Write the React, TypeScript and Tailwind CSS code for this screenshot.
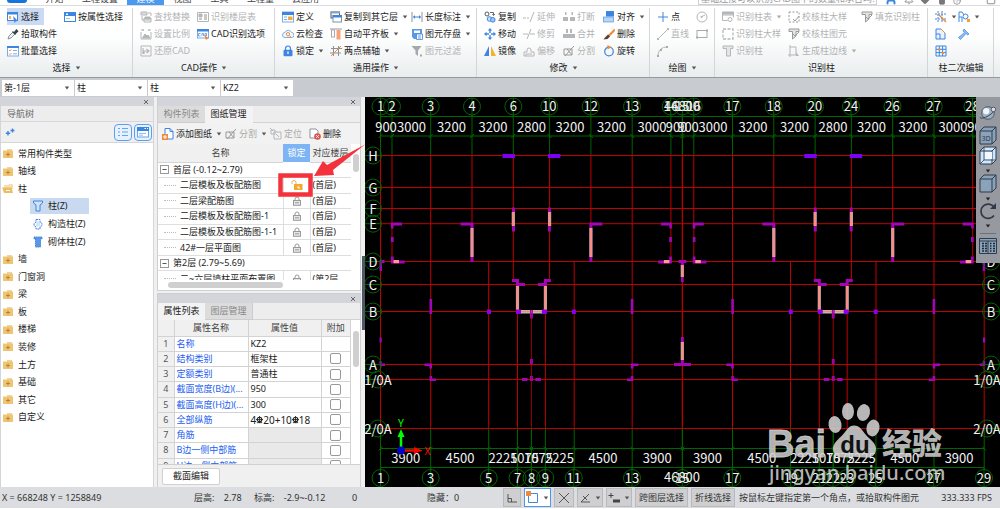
import React from 'react';
import { User, Bell, Heart, Shirt, HelpCircle, Minus, Square } from 'lucide-react';

const B = '#3d86e0';
const O = '#f08a3c';
const G = '#b4b6b8';
const D = '#555b61';

const icons: Record<string, React.ReactNode> = {
  select: (<><rect x=".5" y="1.5" width="10" height="8" fill="#fff" stroke={B} /><path d="M0 1h11v2.5H0z" fill={B} /><path d="M2 5h2v3H2z" fill="#f3b35b" /><path d="M6 5l5 5-2.2.2L7.5 12z" fill={B} /></>),
  attr: (<><rect x=".5" y="1.5" width="11" height="9" fill="#fff" stroke={B} /><path d="M0 1h12v4H0z" fill={B} /><path d="M2 7.5h4" stroke="#9cc" /><path d="M2 2.5h2v1.500H2z" fill="#fff" /></>),
  picker: (<><path d="M1 11l1-3 4-4 2 2-4 4z" fill="#eef3f8" stroke="#7e8892" strokeWidth=".9" /><path d="M5.500 3.500l3 3M7 5l2.500-3 1.200 1.200L8 6z" stroke="#3a4048" fill="#3a4048" strokeWidth="1.200" /></>),
  batch: (<><rect x=".5" y="1.500" width="11" height="9.500" fill="#fff" stroke="#78aee8" /><path d="M0 1h12v2H0z" fill={B} /><path d="M2 5l1 1 1.500-1.500M2 8.500l1 1L4.500 8" stroke={O} fill="none" strokeWidth=".9" /><path d="M6 5.500h4M6 8.800h4" stroke="#78aee8" /></>),
  find: (<g stroke={G} fill="none"><path d="M1 1h6v3H1z" fill="#ddd" /><path d="M8 2h3v3M4 7h7v4H4zM4 9h7M2 5v4h2" /><path d="M5 6h5v2H5z" fill={G} /></g>),
  scale: (<g stroke={G} fill="none"><path d="M1 4v7h10V4M1 2h3M8 2h3M3 1v2M9 1v2" /><path d="M2.500 10l2.500-4 2 2 1-1 2 3z" fill={G} /></g>),
  restore: (<g stroke={G} fill="none"><path d="M1 1h10v10H1z" /><path d="M4 9V6h4M6.500 4L9 6 6.500 8M3 3v6" strokeWidth="1.200" /></g>),
  floors: (<g stroke={G} fill="none"><path d="M.5 1.500h11v9H.5z" /><path d="M2 3h3v3H2z" fill={G} /><path d="M7 4h3M2 8h3M7 6h3M7 8h3" strokeWidth="1.500" /></g>),
  cadopt: (<><rect x=".5" y="1.500" width="11" height="8.500" fill="#fff" stroke="#78aee8" /><path d="M0 1h12v2.500H0z" fill={B} /><path d="M3.500 5.500h-2v2.500h2M5 8V5.500h1.500V8M8 5.500V8h1.500V5.500z" stroke={B} fill="none" strokeWidth=".7" /><path d="M7 7l4.500 3L9 12z" fill={O} /></>),
  define: (<><rect x=".5" y="1" width="11" height="10" fill="#fff" stroke="#78aee8" /><path d="M0 1h12v3H0z" fill={B} /><path d="M6 5.500h4.500V9H6z" fill="#f6a840" /><path d="M2 6h3M2 8.500h3" stroke="#78aee8" /></>),
  cloud: (<><path d="M3 9.500a2.500 2.500 0 010-5 3.500 3.500 0 016.500 0 2.500 2.500 0 010 5z" fill="#f4f9ff" stroke="#78aee8" /><circle cx="6" cy="6.200" r="1.700" fill="none" stroke={O} /><path d="M7.500 7.500l2 2.500" stroke={O} /></>),
  lock: (<><path d="M3.500 5V3.500a2.500 2.500 0 015 0V5" fill="none" stroke={B} strokeWidth="1.200" /><rect x="1.500" y="4.800" width="9" height="6.500" rx="1" fill={B} /><path d="M6 6.500v2.500" stroke="#fff" strokeWidth="1.300" /></>),
  copyfl: (<><rect x="1" y="1" width="8.500" height="6" fill="#fff" stroke={D} /><path d="M.5 .5h9.500v2H.5z" fill="#8fa3b8" /><rect x="3" y="4.500" width="8.500" height="6.500" fill="#fff" stroke="#7b93ab" /><path d="M2.500 4h9.500v2.500H2.500z" fill={B} /></>),
  align2: (<><path d="M0 1h12" stroke="#999" /><rect x="1.500" y="2" width="3" height="7" fill="#fff" stroke="#aaa" /><rect x="6.500" y="2" width="4" height="9.500" fill="#f5a27a" /></>),
  aux: (<><path d="M3.500 1v10M8.500 1v10M1 3.500h11M0 8h11" stroke="#8c9299" /><path d="M1 11L11 1" stroke={O} /></>),
  dim: (<><path d="M1 1v10M11 1v10" stroke="#8c9299" /><path d="M2.500 6h7" stroke={B} /><path d="M4 4L2 6l2 2zM8 4l2 2-2 2z" fill={B} /></>),
  disk: (<><path d="M1 1h10v10H3L1 9z" fill="#5b98e4" /><path d="M3 2.500h6V5H3z" fill="#fff" /><path d="M5.500 6h6v5.500h-6z" fill="#fff" stroke={B} strokeWidth=".8" /><path d="M7 8h3M7 10h3" stroke={B} strokeWidth=".8" /></>),
  filter: (<><path d="M.5 1h10L7 5.500V11L4.500 9V5.500z" fill="#a5a7a9" /><path d="M9 9.500h2v2H9z" fill="#a5a7a9" /></>),
  copy: (<><circle cx="3" cy="3" r="2" fill="none" stroke={D} /><path d="M6 1.500h3.500V4M8.500 3l1 1.500L11 3" stroke={D} fill="none" strokeWidth=".9" /><circle cx="5.500" cy="8" r="2.300" fill="#cfe2f8" stroke={B} /><circle cx="8.800" cy="8.800" r="2.300" fill="#9ec5f2" stroke={B} /></>),
  move: (<path d="M6 0l2.200 2.500H6.700V5H5.300V2.500H3.800zM6 12l2.200-2.500H6.700V7H5.300v2.500H3.800zM0 6l2.500-2.200v1.500H5v1.400H2.500v1.500zM12 6L9.500 3.800v1.500H7v1.400h2.500v1.500z" fill={B} />),
  mirror: (<><path d="M5 1v10H0z" fill={B} /><path d="M7 1v10h5z" fill="#f6b12f" /></>),
  extend: (<g stroke={G}><path d="M0 7h3M4 7h2M7 11l4-10" /></g>),
  trim: (<g stroke={G}><path d="M0 6h5M7 6h5M4 11l4-10" /></g>),
  offset: (<g stroke={G} fill="none"><path d="M1 11V7h3V5a2 2 0 014 0v2h3v4z" /><path d="M3 11V9h6" /></g>),
  breakk: (<g fill={G}><path d="M0 6h5v4H0zM7 6h5v4H7zM2 1h1.500v3H2zM8.500 1H10v3H8.500z" /></g>),
  merge: (<g fill={G}><path d="M0 6h12v4H0zM3 1h2v4H3zM7 1h2v4H7z" /></g>),
  split: (<g stroke="#999" fill="none"><path d="M1 4h8v6H1zM2 11l9-10M4 4l5 6" /></g>),
  aligni: (<><rect x="3" y="0" width="8" height="5.500" rx=".5" fill={B} /><rect x=".5" y="6" width="10" height="5" fill="#b9d5f5" stroke={B} strokeWidth=".6" /></>),
  erase: (<><path d="M11.500 .5L5 7l1.500 1.500L12 3z" fill="#e98a3c" /><path d="M5 6.500L2 9.500 .5 11.500l4-.5 2.500-2.500z" fill="#5a4038" /></>),
  rotate: (<><circle cx="6" cy="6.500" r="4.300" fill="none" stroke={B} strokeWidth="1.200" /><path d="M4.500 0l4 2.200-4 2.300z" fill={O} /></>),
  point: (<path d="M6 1v10M1 6h10" stroke={B} />),
  line: (<><path d="M1 11L11 1" stroke={G} /><path d="M0 10h2v2H0zM10 0h2v2h-2z" fill={G} /></>),
  arc: (<><path d="M1 11C1 5 5 2 10 2" stroke={G} fill="none" /><path d="M0 10h2v2H0zM9 1h2v2H9zM3 4h2v2H3z" fill="#aaa" /></>),
  circle: (<><circle cx="6" cy="6" r="5" stroke={G} fill="none" /><path d="M5 6l4-2" stroke={G} /><circle cx="5.500" cy="6" r="1" fill={G} /></>),
  rect: (<><rect x="1" y="2.500" width="10" height="7" stroke="#aaa" fill="none" /><path d="M0 8.500h2v2H0zM10 1.500h2v2h-2z" fill="#aaa" /></>),
  coltab: (<g stroke={G} fill="none"><path d="M.5 1.500h11v5M.5 1.500v8h5M.5 4h11" /><path d="M0 1h12v2H0z" fill={G} /><circle cx="8" cy="8.500" r="2" /></g>),
  colbig: (<rect x="1" y="1" width="10" height="10" fill="none" stroke={G} strokeDasharray="3 1.500" strokeWidth="1.300" />),
  colcheck: (<><rect x="1" y="1" width="10" height="10" fill="none" stroke="#999" strokeDasharray="2 1.500" /><path d="M5 8l2 2 4-5" stroke="#999" fill="none" /></>),
  col: (<path d="M1 1h10v2.500H8.500V11h-4V3.500H1z" fill="#e4e5e6" stroke={G} />),
  colv: (<><path d="M1 1h10v2.500H8V8L4.500 11V3.500H1z" fill="#e4e5e6" stroke="#999" /><path d="M5 6l2 2 4-4" stroke="#999" fill="none" /></>),
  edge: (<><path d="M2 0v12M0 10h8M2 2h6v8" stroke={G} fill="none" /><path d="M8 7l3 4H8z" fill={G} /></>),
  e1: (<><path d="M3 0v12M7 0v12M0 3h12M0 8h12" stroke={B} strokeDasharray="2 1" /><path d="M3 3l8 8" stroke={O} strokeWidth="1.500" /></>),
  e2: (<><path d="M1 1h5l4 4v6H1zM1 6h4v5" fill="#eaf3fd" stroke={B} /><path d="M6 1l4 4" stroke={O} /></>),
  e3: (<><path d="M1 1h10v10H1zM1 4.300h10M1 7.600h10M4.300 1v10M7.600 1v10" stroke={B} fill="none" /><path d="M3.500 3.500h2v2h-2zM7 7h2v2H7z" fill={O} /></>),
  e4: (<><path d="M1 1v10M1 1h3l2 3M1 6h3v5" stroke={B} fill="none" /><circle cx="7.500" cy="5.500" r="2.500" fill="#fff" stroke={B} /><path d="M9 8h3v3H9z" fill="#f6a02f" /></>),
  e5: (<path d="M6 1l5 5-1.500 1L8 5.500l-5.500 6L.5 9.500 6.500 4.500 5 3z" fill="#8fbdf2" stroke={B} strokeWidth=".7" />),
  add: (<><path d="M3 .5h5l3 3V11H3z" fill="#fff" stroke={B} /><path d="M8 .5v3h3" stroke={B} fill="none" /><path d="M0 6h6v6H0z" fill="#f08a3c" /><path d="M3 7v4M1 9h4" stroke="#fff" /></>),
  loc: (<g stroke={G} fill="none"><path d="M1 2h4v4H1zM4 4h7v7H4zM6 6l3 3M0 0l3 3" /></g>),
  del: (<><path d="M1 1h6l2 2v7H1z" fill="#fff" stroke="#8c9299" /><circle cx="8.500" cy="8.500" r="3.300" fill="#d9534f" /><path d="M7.200 7.200l2.600 2.600M9.800 7.200L7.200 9.800" stroke="#fff" /></>),
};

function Icon({ n, className = 'size-3' }: { n: string; className?: string }) {
  return <svg viewBox="0 0 12 12" aria-hidden="true" className={`${className} shrink-0`}>{icons[n]}</svg>;
}

function Caret({ className = 'text-[#555]' }: { className?: string }) {
  return <svg viewBox="0 0 6 4" aria-hidden="true" className={`h-1 w-1.5 shrink-0 ${className}`}><path d="M.8 .5h4.400L3 3.500z" fill="currentColor" /></svg>;
}

type Item = { i: string; t?: string; off?: boolean; c?: boolean; on?: boolean; a?: string };
type Group = { label: string; caret?: boolean; w: string; cols: { w: string; items: Item[] }[] };

const groups: Group[] = [
  { label: '选择', caret: true, w: 'w-[133px]', cols: [
    { w: 'w-[57px]', items: [{ i: 'select', t: '选择', on: true }, { i: 'picker', t: '拾取构件' }, { i: 'batch', t: '批量选择' }] },
    { w: 'w-[60px]', items: [{ i: 'attr', t: '按属性选择' }] },
  ] },
  { label: 'CAD操作', caret: true, w: 'w-[142px]', cols: [
    { w: 'w-[57px]', items: [{ i: 'find', t: '查找替换', off: true }, { i: 'scale', t: '设置比例', off: true }, { i: 'restore', t: '还原CAD', off: true }] },
    { w: 'w-[70px]', items: [{ i: 'floors', t: '识别楼层表', off: true }, { i: 'cadopt', t: 'CAD识别选项' }] },
  ] },
  { label: '通用操作', caret: true, w: 'w-[202px]', cols: [
    { w: 'w-[48px]', items: [{ i: 'define', t: '定义' }, { i: 'cloud', t: '云检查' }, { i: 'lock', t: '锁定', c: true }] },
    { w: 'w-[81px]', items: [{ i: 'copyfl', t: '复制到其它层', c: true }, { i: 'align2', t: '自动平齐板', c: true }, { i: 'aux', t: '两点辅轴', c: true }] },
    { w: 'w-[62px]', items: [{ i: 'dim', t: '长度标注', c: true }, { i: 'disk', t: '图元存盘', c: true }, { i: 'filter', t: '图元过滤', off: true }] },
  ] },
  { label: '修改', caret: true, w: 'w-[173px]', cols: [
    { w: 'w-[39px]', items: [{ i: 'copy', t: '复制' }, { i: 'move', t: '移动' }, { i: 'mirror', t: '镜像' }] },
    { w: 'w-[40px]', items: [{ i: 'extend', t: '延伸', off: true }, { i: 'trim', t: '修剪', off: true }, { i: 'offset', t: '偏移', off: true }] },
    { w: 'w-[40px]', items: [{ i: 'breakk', t: '打断', off: true }, { i: 'merge', t: '合并', off: true }, { i: 'split', t: '分割', off: true }] },
    { w: 'w-[42px]', items: [{ i: 'aligni', t: '对齐', c: true }, { i: 'erase', t: '删除' }, { i: 'rotate', t: '旋转' }] },
  ] },
  { label: '绘图', caret: true, w: 'w-[65px]', cols: [
    { w: 'w-[39px]', items: [{ i: 'point', t: '点' }, { i: 'line', t: '直线', off: true }, { i: 'arc', off: true, a: '圆弧' }] },
    { w: 'w-[14px]', items: [{ i: 'circle', off: true, a: '圆' }, { i: 'rect', off: true, a: '矩形' }] },
  ] },
  { label: '识别柱', w: 'w-[213px]', cols: [
    { w: 'w-[66px]', items: [{ i: 'coltab', t: '识别柱表', off: true, c: true }, { i: 'colbig', t: '识别柱大样', off: true }, { i: 'col', t: '识别柱', off: true }] },
    { w: 'w-[73px]', items: [{ i: 'colcheck', t: '校核柱大样', off: true }, { i: 'colv', t: '校核柱图元', off: true }, { i: 'edge', t: '生成柱边线', off: true, c: true }] },
    { w: 'w-[62px]', items: [{ i: 'colv', t: '填充识别柱', off: true }] },
  ] },
  { label: '柱二次编辑', w: 'w-[66px]', cols: [
    { w: 'w-[23px]', items: [{ i: 'e1', c: true, a: '调整柱端头' }, { i: 'e2', a: '设置斜柱' }, { i: 'e3', a: '柱网' }] },
    { w: 'w-[24px]', items: [{ i: 'e4', c: true, a: '判断边角柱' }, { i: 'e5', a: '查改标注' }] },
  ] },
];

function Ribbon() {
  return (
    <div className="flex h-[73px] shrink-0 border-b border-t border-b-[#96999c] border-t-[#dcdde0] bg-linear-to-b from-white from-40% to-[#e9edee]">
      {groups.map((g) => (
        <section key={g.label} className={`${g.w} flex shrink-0 flex-col pt-0.5`}>
          <div className="flex h-[69px] flex-col border-r border-[#d3d6d9] pl-[7px]">
            <div className="flex h-[52px]">
              {g.cols.map((c, k) => (
                <div key={k} className={`${c.w} shrink-0`}>
                  {c.items.map((it) => (
                    <button key={it.i + (it.t ?? '')} type="button" disabled={it.off} aria-label={it.t ?? it.a} className={`flex h-[17px] items-center gap-0.5 whitespace-nowrap text-[9px] leading-3 ${it.off ? 'text-[#b2b3b5]' : 'text-[#1c1c1c]'} ${it.on ? 'w-[37px] bg-[#c9daf2]' : ''}`}>
                      <Icon n={it.i} />
                      {it.t && <span>{it.t}</span>}
                      {it.c && <Caret className={it.off ? 'ml-0.5 text-[#aaa]' : 'ml-0.5 text-[#555]'} />}
                    </button>
                  ))}
                </div>
              ))}
            </div>
            <div className="flex h-4 items-center justify-center gap-1 whitespace-nowrap pr-1.5 text-[9px] leading-3 text-[#222]">
              {g.label}{g.caret && <Caret />}
            </div>
          </div>
        </section>
      ))}
    </div>
  );
}

function TopTabs() {
  const tab = 'w-[37px] shrink-0 text-center whitespace-nowrap';
  return (
    <header className="flex h-[5px] shrink-0 items-end overflow-hidden bg-white text-[9px] leading-3 text-[#444]">
      <div className="flex w-[36px] shrink-0 items-start self-stretch pl-[7px]"><span className="h-[3px] w-5 rounded-b-full bg-[#1672dc]" /></div>
      <button type="button" className={tab}>开始</button>
      <button type="button" className="w-[54px] shrink-0 text-center">工程设置</button>
      <button type="button" className={`${tab} bg-[#4a98f0] text-white`}>建模</button>
      <button type="button" className={tab}>视图</button>
      <button type="button" className={tab}>工具</button>
      <button type="button" className="w-[45px] shrink-0 text-center">工程量</button>
      <button type="button" className="w-[45px] shrink-0 text-center">云应用</button>
      <div className="flex-1" />
      <input aria-label="搜索" placeholder="基础连接可以识别CAD图中的数量和承台吗?" className="h-3 w-[179px] border border-[#cfcfcf] bg-white pl-0.5 text-[9px] leading-3 placeholder:text-[#999]" />
      <div className="flex w-[123px] items-end justify-between pl-2 pr-1 text-[#777]">
        <User className="size-3 text-[#3d86e0]" strokeWidth={4} /><Bell className="size-2.5" /><Heart className="size-2.5" fill="#777" /><Shirt className="size-2.5" fill="#777" /><HelpCircle className="size-2" /><Minus className="size-3" /><Square className="size-2.5" />
      </div>
    </header>
  );
}

function SelectorBar() {
  const list: [string, string][] = [['楼层', '第-1层'], ['构件类型', '柱'], ['构件', '柱'], ['名称', 'KZ2']];
  return (
    <div className="flex h-[19px] shrink-0 items-center gap-px bg-[#c8cbd0] pl-0.5">
      {list.map(([n, v]) => (
        <label key={n} className="relative flex h-4 w-[72px] items-center bg-white">
          <select aria-label={n} className="h-4 w-full appearance-none bg-transparent pl-0.5 text-[9px] leading-4 text-[#222]"><option>{v}</option></select>
          <Caret className="pointer-events-none absolute right-1 text-[#555]" />
        </label>
      ))}
    </div>
  );
}

function PanelTop() {
  return <div className="flex h-[9px] shrink-0 items-center justify-end bg-[#d3d5db] pr-1"><button type="button" aria-label="关闭" className="flex"><svg viewBox="0 0 6 6" className="size-1.5"><path d="M1 1l4 4M5 1L1 5" stroke="#666" /></svg></button></div>;
}

function Folder({ open }: { open?: boolean }) {
  return (
    <svg viewBox="0 0 12 11" aria-hidden="true" className="h-[11px] w-3 shrink-0">
      {open ? <><path d="M2 2h4l1-1h4v5H2z" fill="#f7dfae" /><path d="M0 4.500h9.500L11 10H2z" fill="#ecbd63" /><path d="M4 7.500h4" stroke="#fff" /></>
        : <><path d="M5 1h5v2H5z" fill="#f3d498" /><path d="M1 2.500h10V10H1z" fill="#efc574" /><path d="M6 4.500v4M4 6.500h4" stroke="#b8852f" /></>}
    </svg>
  );
}

function TreeIcon({ k }: { k: number }) {
  return (
    <svg viewBox="0 0 12 12" aria-hidden="true" className="size-3 shrink-0">
      {k === 0 && <path d="M1.500 1h9v2L8 5v6H4V5L1.500 3z" fill="#cfe2f8" stroke={B} />}
      {k === 1 && <><path d="M4 1.500h4V4l2 1.500v2L8 9v2H4V9L2 7.500v-2L4 4z" fill="#fff" stroke={B} strokeDasharray="2 .7" /><path d="M5 3.500v5M7 3.500v5" stroke="#a8ccf4" /></>}
      {k === 2 && <path d="M2 1h8v2H8.500v8h-5V3H2z" fill="#5b98e4" stroke={B} strokeDasharray="1.500 .6" />}
    </svg>
  );
}

function NavTree() {
  const top = ['常用构件类型', '轴线', '柱'];
  const kids = ['柱(Z)', '构造柱(Z)', '砌体柱(Z)'];
  const rest = ['墙', '门窗洞', '梁', '板', '楼梯', '装修', '土方', '基础', '其它', '自定义'];
  return (
    <aside className="flex w-[154px] shrink-0 flex-col border-x border-[#d3d5db] bg-white">
      <PanelTop />
      <h2 className="flex h-4 items-center border-b border-[#d8d8d8] bg-[#ededed] pl-1.5 text-[9px] leading-3 text-[#666]">导航树</h2>
      <div className="flex h-[21px] shrink-0 items-center gap-0.5 border-b border-[#d5d5d5] bg-[#f0f0f0] pl-1 pr-px">
        <button type="button" aria-label="添加" className="mr-auto"><svg viewBox="0 0 10 8" className="h-2 w-2.5"><path d="M3 3v4.500M.8 5.200h4.400M7.500 .5v4M5.500 2.500h4" stroke={B} strokeWidth="1.400" /></svg></button>
        <button type="button" aria-label="列表" className="flex h-[17px] w-[18px] items-center justify-center rounded-sm border border-[#5a9ff0] bg-[#e8f2fe]"><svg viewBox="0 0 12 12" className="size-3"><path d="M1 2.500h2M1 6h2M1 9.500h2M5 2.500h6M5 6h6M5 9.500h6" stroke="#62a5f2" strokeWidth="1.200" /></svg></button>
        <button type="button" aria-label="图标" className="flex h-[17px] w-[18px] items-center justify-center rounded-sm border border-[#5a9ff0] bg-[#e8f2fe]"><svg viewBox="0 0 12 12" className="size-3"><rect x=".5" y="1.500" width="11" height="9.500" fill="#fff" stroke="#62a5f2" /><path d="M0 1h12v4H0z" fill="#3d86e0" /><path d="M7.500 2.500h1.500M10 2.500h1" stroke="#fff" /><path d="M2 7.500h7M2 9.200h4" stroke="#62a5f2" strokeWidth=".7" /></svg></button>
      </div>
      <ul className="mt-[2px] grid h-[281px] auto-rows-fr text-[9px] leading-3 text-[#222]">
        {top.map((t, k) => <li key={t} className="flex items-center gap-1 pl-px"><Folder open={k === 2} />{t}</li>)}
        {kids.map((t, k) => (
          <li key={t} className="flex items-center pl-[29px]"><span className={`flex h-4 w-[59px] items-center gap-1 whitespace-nowrap pl-0.5 ${k === 0 ? 'bg-[#c9d9f0]' : ''}`}><TreeIcon k={k} />{t}</span></li>
        ))}
        {rest.map((t) => <li key={t} className="flex items-center gap-1 pl-px"><Folder />{t}</li>)}
      </ul>
    </aside>
  );
}

function Padlock({ open }: { open?: boolean }) {
  return open ? (
    <svg viewBox="0 0 12 12" aria-label="未锁定" className="mx-auto size-3"><path d="M1 5V3.500a2 2 0 014 0V5" fill="none" stroke="#f0a870" /><rect x="3" y="5" width="8.500" height="6" fill="#f2a92e" /><path d="M7 7v2h2" stroke="#fff" fill="none" /></svg>
  ) : (
    <svg viewBox="0 0 10 10" aria-label="已锁定" className="mx-auto size-2.5"><path d="M3 4.500V3a2 2 0 014 0v1.500" fill="none" stroke="#999" /><rect x="1.500" y="4.500" width="7" height="4.800" fill="#e6e6e6" stroke="#999" /><path d="M3 6.800h4" stroke="#999" /></svg>
  );
}

function Tabs({ a, b, second }: { a: string; b: string; second?: boolean }) {
  const on = 'bg-[#f3f3f3] text-[#222] border-[#f3f3f3]';
  const off = 'bg-[#dcdcdc] text-[#888] border-[#ccc]';
  return (
    <div role="tablist" className="flex h-[17px] shrink-0 bg-[#ededed] text-[9px] leading-3">
      <button role="tab" type="button" aria-selected={!second} className={`w-[47px] border-b ${second ? off : on}`}>{a}</button>
      <button role="tab" type="button" aria-selected={!!second} className={`w-[48px] border-b border-r ${second ? on : off}`}>{b}</button>
      <span className="flex-1 border-b border-[#d3d3d3]" />
    </div>
  );
}

function DrawingPanel() {
  const rows = ['二层模板及板配筋图', '二层梁配筋图', '二层模板及板配筋图-1', '二层模板及板配筋图-1-1', '42#一层平面图'];
  const box = <svg viewBox="0 0 9 9" aria-hidden="true" className="size-[9px] shrink-0"><rect x=".5" y=".5" width="8" height="8" fill="#fff" stroke="#999" /><path d="M2.500 4.500h4" stroke="#555" /></svg>;
  const dash = <span className="mr-1 h-px w-3 border-t border-dotted border-[#bbb]" />;
  return (
    <section className="flex h-[194px] shrink-0 flex-col border-x border-b border-[#cfcfcf] bg-white">
      <PanelTop />
      <Tabs a="构件列表" b="图纸管理" second />
      <div className="flex h-[21px] shrink-0 items-center gap-[3px] whitespace-nowrap bg-[#f2f2f2] pl-1 text-[9px] leading-3 text-[#222]">
        <button type="button" className="flex items-center gap-0.5"><Icon n="add" />添加图纸<Caret className="ml-0.5 text-[#555]" /></button>
        <button type="button" disabled className="flex items-center gap-0.5 text-[#aaa]"><Icon n="split" />分割<Caret className="ml-0.5 text-[#555]" /></button>
        <button type="button" disabled className="flex items-center gap-0.5 text-[#aaa]"><Icon n="loc" />定位</button>
        <button type="button" className="ml-1 flex items-center gap-0.5"><Icon n="del" />删除</button>
      </div>
      <div className="flex h-[136px] shrink-0">
        <div className="h-full w-[193px] overflow-hidden">
          <table className="h-[142px] w-full table-fixed border-collapse whitespace-nowrap text-[9px] leading-3 text-[#222]">
            <colgroup><col className="w-[125px]" /><col className="w-[27px]" /><col /></colgroup>
            <thead><tr className="h-[18px] bg-[#f0f0f0] text-[#444]"><th className="border-b border-[#d5d5d5] p-0 font-normal">名称</th><th className="bg-[#7db4f5] p-0 font-normal text-white">锁定</th><th className="border-b border-[#d5d5d5] p-0 font-normal">对应楼层</th></tr></thead>
            <tbody>
              <tr className="border-b border-[#dedede]"><td colSpan={3} className="p-0"><span className="flex items-center gap-1 pl-0.5">{box}首层 (-0.12~2.79)</span></td></tr>
              {rows.map((r, k) => (
                <tr key={r} className="border-b border-[#dedede]">
                  <td className="border-r border-[#dedede] p-0"><span className="flex items-center pl-1.5">{dash}{r}</span></td>
                  <td className="border-r border-[#dedede] p-0"><Padlock open={k === 0} /></td>
                  <td className="p-0 pl-0.5">(首层)</td>
                </tr>
              ))}
              <tr className="border-b border-[#dedede]"><td colSpan={3} className="p-0"><span className="flex items-center gap-1 pl-0.5">{box}第2层 (2.79~5.69)</span></td></tr>
              <tr><td className="border-r border-[#dedede] p-0"><span className="flex items-center pl-1.5">{dash}二~六层墙柱平面布置图</span></td><td className="border-r border-[#dedede] p-0"><Padlock /></td><td className="p-0 pl-0.5">(第2层 ...</td></tr>
            </tbody>
          </table>
        </div>
        <div className="flex-1 pt-2.5"><div className="mx-auto h-[18px] w-1.5 rounded-full bg-[#cfcfcf]" /></div>
      </div>
      <div className="pl-2.5 pt-0.5"><div className="h-1.5 w-[115px] rounded-full bg-[#cfcfcf]" /></div>
    </section>
  );
}

function Rebar() {
  return <svg viewBox="0 0 8 9" aria-hidden="true" className="inline-block h-2 w-[7px]"><path d="M4 0v8M1 7.500h6M0 4h8" stroke="#222" /><circle cx="4" cy="4" r="2.600" fill="none" stroke="#222" strokeWidth="1.300" /></svg>;
}

function PropertyPanel() {
  const rows: [string, React.ReactNode][] = [
    ['名称', 'KZ2'], ['结构类别', '框架柱'], ['定额类别', '普通柱'], ['截面宽度(B边)(...', '950'], ['截面高度(H边)(...', '300'],
    ['全部纵筋', <span key="r" className="flex items-center text-[10px]">4<Rebar />20+10<Rebar />18</span>], ['角筋', ''], ['B边一侧中部筋', ''], ['H边一侧中部筋', ''],
  ];
  return (
    <section className="flex min-h-0 flex-1 flex-col border border-b-0 border-[#cfcfcf] bg-[#f0f0f0]">
      <PanelTop />
      <Tabs a="属性列表" b="图层管理" />
      <div className="flex h-[145px] shrink-0 border-b border-[#d0d0d0] bg-white">
        <div className="h-full w-[193px] overflow-hidden">
          <table className="h-[154px] w-full table-fixed border-collapse whitespace-nowrap text-[9px] leading-3 text-[#222]">
            <colgroup><col className="w-4" /><col className="w-[74px]" /><col className="w-[73px]" /><col /></colgroup>
            <thead><tr className="h-4 bg-[#f0f0f0] text-[#444]"><th className="border-b border-r border-[#d3d3d3] p-0" /><th className="border-b border-r border-[#d3d3d3] p-0 font-normal">属性名称</th><th className="border-b border-r border-[#d3d3d3] p-0 font-normal">属性值</th><th className="border-b border-r border-[#d3d3d3] p-0 font-normal">附加</th></tr></thead>
            <tbody>
              {rows.map(([n, v], k) => (
                <tr key={n}>
                  <td className="border-b border-r border-[#d3d3d3] bg-[#f0f0f0] p-0 text-center text-[#555]">{k + 1}</td>
                  <td className="border-b border-r border-[#d3d3d3] p-0 pl-0.5 text-[#2460f0]">{n}</td>
                  <td className={`border-b border-r border-[#d3d3d3] p-0 pl-0.5 ${k > 5 ? 'bg-[#e9e9e9]' : ''}`}>{v}</td>
                  <td className="border-b border-r border-[#d3d3d3] p-0">{k > 0 && <input type="checkbox" aria-label={`附加 ${n}`} className="mx-auto block size-[11px] appearance-none rounded-xs border border-[#999] bg-white" />}</td>
                </tr>
              ))}
            </tbody>
          </table>
        </div>
        <div className="flex-1 pt-[11px]"><div className="mx-auto h-9 w-1.5 rounded-full bg-[#cfcfcf]" /></div>
      </div>
      <div className="flex flex-1 items-center pl-1"><button type="button" className="h-[17px] w-[58px] rounded-xs border border-[#d0d0d0] bg-white text-[9px] leading-3 text-[#222]">截面编辑</button></div>
    </section>
  );
}

const RED = '#c00000';
const GR = '#006400';
const PU = '#a404b4';
const yLines = [155.5, 187.5, 208.5, 223.7, 261.5, 284.5, 311.5, 364.5, 379.5, 428.5];

function Bar({ x, y, h }: { x: number; y: number; h: number }) {
  return <><rect x={x - 1.600} y={y} width="3.200" height={h} fill="#b0a8a0" /><rect x={x - 1} y={y} width="2" height={h} fill="#ff8c84" /></>;
}

/* One wing of the floor plan; each building is a wing and its reflection. */
function Wing() {
  return (
    <>
      <g stroke={RED} fill="none">
        <path d="M380.500 155V428.500M392 155V261M430.700 155V428.500M472 155V261M513.300 155V280M488.700 261V428.500M517.500 284V428.500" />
        <path d="M531.450 311V428.500" strokeWidth=".5" />
      </g>
      <path stroke={GR} d="M380.500 115V155M392 115V155M430.700 115V155M472 115V155M513.300 115V155M380.500 428.500V470M430.700 428.500V470M488.700 428.500V470M517.500 428.500V470M531.450 428.500V470" />
      <g stroke={GR}>{[380.5, 392, 430.7, 472, 513.3].map((x) => <path key={x} d={`M${x - 2} 138l4-4`} />)}{[380.5, 430.7, 488.7, 517.5, 531.5].map((x) => <path key={x} d={`M${x - 2} 450.500l4-4`} />)}</g>
      <rect x="502.500" y="154" width="12.500" height="4" fill="#7d00f0" />
      <g fill={PU}>
        <path d="M512 207.500h3v24h-3zM391 222.500h11v3h-8.500v3H391zM391 237h2.700v5H391zM391 256.500h2.700v4h11v3H391zM379.500 260h5v3h-2.500v8h-2.500z" />
        <path d="M460.500 222.500h13v39.500h-3v-36.500h-10zM512 279h7v4h6v3h-9v-4h-4zM429.500 299h2.600v15h-2.600zM379.500 337.500h2.200v5h-2.200zM379.500 361h2v2.500h3.500v2.500h-5.500zM424.500 363.500h7.500v5h-2.600v-2.500h-5zM429.500 376h2.600v2.500h4v2.500h-6.600zM522 378h5.500v3H522zM530 359h1.500v5H530zM530 376h1.500v5H530z" />
      </g>
      <path d="M487 309.500h4v4.500h-4z" fill="#8a00e8" />
      <Bar x={513.3} y={212} h={14} />
      <Bar x={472} y={228} h={29} />
      <Bar x={517.5} y={286} h={25} />
      <rect x="393.500" y="260" width="5.500" height="3.200" fill="#ff9a90" />
      <rect x="519" y="310" width="12.500" height="3.500" fill="#c8b4ac" />
      <path d="M519 311.500h12.500" stroke="#f08078" strokeWidth=".8" />
      <path d="M516 309.500h5v4.500h-5z" fill="#8a00e8" />
      <path d="M530 310h1.500v8.500H530z" fill={PU} />
    </>
  );
}

function Building() {
  return <><Wing /><g transform="translate(1062.9 0) scale(-1 1)"><Wing /></g></>;
}

const topAxes: [number, string][] = [[380.5, '1'], [392, '2'], [430.7, '3'], [472, '4'], [513.3, '6'], [549.3, '10'], [590.7, '12'], [632, '13'], [670.7, '14'], [682.3, '15'], [693.7, '16'], [732.3, '17'], [773.7, '18'], [815, '20'], [851, '24'], [892.5, '26'], [933.7, '27'], [972.5, '28'], [984, '29']];
const bottomAxes: [number, string][] = [[380.5, '1'], [430.7, '3'], [488.7, '5'], [517.5, '7'], [531.5, '8'], [545.3, '9'], [573.8, '11'], [632, '13'], [682.3, '15'], [732.3, '17'], [790.7, '19'], [819.3, '21'], [833, '22'], [847, '23'], [875.5, '25'], [933.7, '27'], [984, '29']];
const topDims: [number, string][] = [[386, '900'], [411.5, '3000'], [451.5, '3200'], [493, '3200'], [531.5, '2800'], [570, '3200'], [611.5, '3200'], [652, '3000'], [676.5, '900'], [688, '900'], [713, '3000'], [753, '3200'], [794.5, '3200'], [833, '2800'], [871.5, '3200'], [913, '3200'], [953, '3000'], [978, '900']];
const bottomDims: [number, string][] = [[405.7, '3900'], [460, '4500'], [503, '2225'], [524.5, '1075'], [538.5, '1075'], [559.5, '2225'], [603, '4500'], [657.3, '3900']];

function CadView() {
  const names = ['H', 'G', 'F', 'E', 'D', 'C', 'B', 'A', '1/0A', '2/0A'];
  return (
    <div className="relative min-w-0 flex-1 overflow-hidden bg-black">
      <svg viewBox="365 97 635 390" preserveAspectRatio="xMinYMin slice" role="img" aria-label="轴网平面图" className="h-full w-full font-['Noto_Sans_CJK_SC','Noto_Sans',sans-serif]">
        <g stroke={GR} fill="none"><path d="M380 116.500H984M380 136H984M380 448.500H984M380 467.500H984" /></g>
        <g stroke={RED}>{yLines.map((y) => <path key={y} d={`M381 ${y}H984`} />)}</g>
        <Building />
        <g transform="translate(301.800 0)"><Building /></g>
        <g fill={PU}><path d="M681 260h2.700v22H681zM681 337h2.700v27H681zM674 363h17v3h-17z" /></g>
        <Bar x={682.3} y={265} h={12} />
        <Bar x={682.3} y={342} h={18} />
        <g stroke={GR} fill="none">
          {topAxes.map(([x, t]) => <React.Fragment key={t}><circle cx={x} cy="106.500" r="8.500" /><path d={`M${x} 98v18`} /></React.Fragment>)}
          {bottomAxes.map(([x, t]) => <React.Fragment key={t}><circle cx={x} cy="478" r="8.500" /><path d={`M${x} 467v19`} /></React.Fragment>)}
          {yLines.map((y, k) => <React.Fragment key={y}><circle cx={k > 7 ? 378 : 373} cy={y} r="8.500" /><circle cx={k > 7 ? 987 : 991} cy={y} r="8.500" /><path d={`M365 ${y}h16M984 ${y}h16`} /></React.Fragment>)}
        </g>
        <g fill="#f2f2f2" fontSize="13" textAnchor="middle">
          {topAxes.map(([x, t]) => <text key={t} x={x} y="111">{t}</text>)}
          <text x="682" y="111">46800</text>
          {topDims.map(([x, t]) => <text key={x} x={x} y="131.500">{t}</text>)}
          {bottomDims.map(([x, t]) => <React.Fragment key={x}><text x={x} y="462.500">{t}</text><text x={x + 301.8} y="462.500">{t}</text></React.Fragment>)}
          {bottomAxes.map(([x, t]) => <text key={t} x={x} y="483">{t}</text>)}
          <text x="682" y="482">46800</text>
          {names.map((n, k) => <React.Fragment key={n}><text x={k > 7 ? 378 : 373} y={yLines[k] + 5}>{n}</text><text x={k > 7 ? 987 : 991} y={yLines[k] + 5}>{n}</text></React.Fragment>)}
        </g>
        <g>
          <path d="M401 450V436" stroke="#0f0" strokeWidth="2.500" /><path d="M397.500 437L401 429l3.500 8z" fill="#0f0" />
          <path d="M401 450.500h14" stroke="red" strokeWidth="2.500" /><path d="M414 447l8.500 3.500-8.500 3.500z" fill="red" />
          <circle cx="401" cy="450.500" r="4" fill="#0000c8" />
          <text x="401" y="427" fontSize="11" textAnchor="middle" fill="#0f0">Y</text><text x="427.500" y="454.500" fontSize="11" textAnchor="middle" fill="red">X</text>
        </g>
        <g fill="#d2d2d2" fillOpacity=".87">
          <text x="767" y="456.500" fontSize="38" fontWeight="700" stroke="#d2d2d2" strokeOpacity=".87" strokeWidth=".8" className="font-['Liberation_Sans',sans-serif]">Bai</text>
          <ellipse cx="835" cy="424.500" rx="6.500" ry="8.500" transform="rotate(-10 835 424.500)" /><ellipse cx="848" cy="411.500" rx="6" ry="8.500" /><ellipse cx="863.500" cy="412.500" rx="6.500" ry="8.500" transform="rotate(12 863.500 412.500)" /><ellipse cx="873" cy="428" rx="6.500" ry="8.500" transform="rotate(12 873 428)" />
          <path d="M854 425.500c6 0 8 5 12 9.500s10 8 10 14-4 8.500-9 8.500c-4 0-8-.8-13-.8s-8 .8-12 .8c-6 0-9-4-9-9s5-9 9.500-13.500 6-9.500 11.500-9.500z" />
          <text x="882" y="454" fontSize="30" fontWeight="900">经验</text>
          <text x="769" y="480" fontSize="20" fontWeight="500" className="font-['Noto_Sans','Liberation_Sans',sans-serif]">jingyan.baidu.com</text>
        </g>
        <text x="855" y="453" fontSize="24" fontWeight="700" textAnchor="middle" fill="#111" className="font-['Liberation_Sans',sans-serif]">du</text>
      </svg>
      <ViewTools />
    </div>
  );
}

function ViewTools() {
  const cube = (kind: number) => (
    <svg viewBox="0 0 20 19" aria-hidden="true" className="h-[19px] w-5">
      <path d="M2 5l4-4h12v13l-4 4H2z" fill={kind === 1 ? '#cfe6ff' : '#8aa2ba'} stroke="#2f3b48" />
      <path d="M2 5h12v13M14 5l4-4" fill="none" stroke="#2f3b48" />
      {kind === 1 && <path d="M6 1v13h12M6 14l-4 4" fill="none" stroke="#2f3b48" strokeWidth=".8" />}
      {kind === 1 && <path d="M7 6h7v7H7z" fill="#f1f8ff" />}
      {kind === 0 && <text x="8" y="14.500" fontSize="7" textAnchor="middle" fill="#2f3b48">3D</text>}
    </svg>
  );
  const b = 'flex h-6 items-center justify-center';
  return (
    <div className="absolute right-0 top-0 flex h-[166px] w-6 flex-col items-center bg-[#9699a0] pt-1">
      <button type="button" aria-label="动态观察" className={b}><svg viewBox="0 0 20 20" className="size-[18px]"><circle cx="10" cy="10" r="7" fill="#9eb0c2" stroke="#46525f" /><circle cx="8" cy="8" r="3.500" fill="#eef4fa" /><path d="M1 15c3 3 15-4 17-9" fill="none" stroke="#2f3b48" /><circle cx="16" cy="6" r="2.500" fill="#d7e0ea" stroke="#46525f" /></svg></button>
      <button type="button" aria-label="三维" className="flex h-5 items-center">{cube(0)}</button>
      <button type="button" aria-label="俯视" className="flex h-7 flex-col items-center justify-center gap-1">{cube(1)}<Caret className="text-[#222]" /></button>
      <button type="button" aria-label="实体" className="flex h-7 flex-col items-center justify-center gap-1">{cube(2)}<Caret className="text-[#222]" /></button>
      <button type="button" aria-label="旋转视图" className="flex h-7 flex-col items-center justify-center gap-1"><svg viewBox="0 0 20 18" className="h-[18px] w-5"><path d="M16 13.500A7.200 7.200 0 1116 5" fill="none" stroke="#2f3b48" strokeWidth="1.700" /><path d="M18 1v6h-6z" fill="#2f3b48" /></svg><Caret className="text-[#222]" /></button>
      <span className="mt-1 h-px w-4 bg-[#6c7078]" />
      <button type="button" aria-label="显示设置" className={b}><svg viewBox="0 0 20 18" className="h-[18px] w-5"><path d="M1.500 1.500h17v15h-17z" fill="#8aa2ba" stroke="#2f3b48" /><path d="M1.500 4h17M10 4v12" stroke="#2f3b48" /><path d="M4 6.500h2M7 6.500h2M4 9h2M7 9h2M4 11.500h2M7 11.500h2M4 14h2M7 14h2M12 6.500h1.500M15 6.500h2M12 9h1.500M15 9h2M12 11.500h1.500M15 11.500h2M12 14h1.500M15 14h2" stroke="#1f2933" strokeWidth="1.300" /></svg></button>
    </div>
  );
}

function StatusBar() {
  const btn = 'flex h-[19px] shrink-0 items-center justify-center gap-1 border border-[#b9b9bb] bg-[#cfcfd1]';
  return (
    <footer className="flex h-[22px] shrink-0 items-center whitespace-nowrap border-b border-white bg-[#dcdde0] text-[9px] leading-3 text-[#333]">
      <span className="w-[192px] shrink-0 pl-0.5">X = 668248 Y = 1258849</span>
      <span className="w-[62px] shrink-0 pl-0.5">层高:&nbsp;&nbsp;&nbsp; 2.78</span>
      <span className="w-[98px] shrink-0">标高:&nbsp;&nbsp;&nbsp; -2.9~-0.12</span>
      <span className="w-[75px] shrink-0">0</span>
      <span className="w-[76px] shrink-0">隐藏：0</span>
      <div className="flex shrink-0 gap-[3px]">
        <button type="button" aria-label="正交" className={`${btn} w-[18px]`}><svg viewBox="0 0 12 12" className="size-3"><path d="M2 2v8h9M2 6.500h3.500V10" stroke="#555" fill="none" /></svg></button>
        <button type="button" aria-label="对象捕捉" className="flex h-[19px] w-[27px] items-center justify-center gap-1 border border-[#4a98f0] bg-white"><svg viewBox="0 0 13 13" className="size-[13px]"><path d="M2.500 2.500h9v9h-9z" fill="none" stroke="#4a86d8" /><path d="M0 0h5v5H0z" fill={O} /></svg><Caret /></button>
        <button type="button" aria-label="交点" className={`${btn} w-5`}><svg viewBox="0 0 12 12" className="size-3"><path d="M1 1l10 10M11 1L1 11" stroke="#555" /></svg></button>
        <button type="button" aria-label="角度" className={`${btn} w-[26px]`}><svg viewBox="0 0 12 12" className="size-3"><path d="M10 2L2 10h9" stroke="#555" fill="none" /><path d="M4 4l4 4" stroke="#555" /></svg><Caret /></button>
        <button type="button" aria-label="偏移输入" className={`${btn} w-[26px]`}><svg viewBox="0 0 12 12" className="size-3"><path d="M3 1v5M.5 3.500h5" stroke="#444" /><path d="M5 7.500h7v3H5z" fill="#444" /></svg><Caret /></button>
        <button type="button" className={`${btn} w-[53px]`}>跨图层选择</button>
        <button type="button" className={`${btn} w-[44px]`}>折线选择</button>
      </div>
      <span className="pl-1">按鼠标左键指定第一个角点，或拾取构件图元</span>
      <span className="ml-auto pr-2">333.333 FPS</span>
    </footer>
  );
}

export default function App() {
  return (
    <div className="flex h-screen flex-col overflow-hidden bg-[#f0f0f0] font-['Noto_Sans','Noto_Sans_CJK_SC',sans-serif]">
      <TopTabs />
      <Ribbon />
      <SelectorBar />
      <main className="flex min-h-0 flex-1">
        <NavTree />
        <div className="relative flex w-[211px] shrink-0 flex-col gap-0.5 pl-[3px] pr-1">
          <DrawingPanel />
          <PropertyPanel />
          <span className="absolute right-0 top-[159px] h-[74px] w-[3px] bg-[#4d5965]" />
          <svg viewBox="0 0 90 56" aria-hidden="true" className="pointer-events-none absolute left-[123px] top-[46px] z-10 h-14 w-[90px] overflow-visible">
            <rect x="3.500" y="32.500" width="30" height="19" fill="none" stroke="#f4323c" strokeWidth="4.500" />
            <path d="M37 33L46 18l4 4L88 1.500 56 27l1 5z" fill="#f4323c" />
          </svg>
        </div>
        <CadView />
      </main>
      <StatusBar />
    </div>
  );
}
